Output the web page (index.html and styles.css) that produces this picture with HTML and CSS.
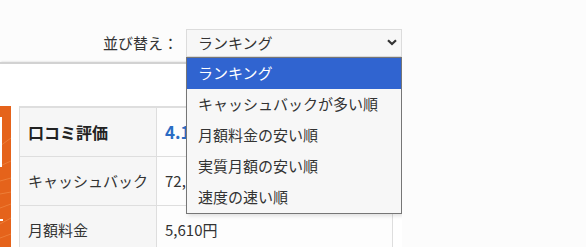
FILE: index.html
```html
<!DOCTYPE html>
<html lang="ja">
<head>
<meta charset="utf-8">
<link rel="stylesheet" href="styles.css">
</head>
<body>
<div class="page">
  <div class="sortbar">
    <span class="sort-label">並び替え：</span>
    <div class="sort">
      <div class="select">
        <span>ランキング</span>
        <svg class="chev" width="10" height="7" viewBox="0 0 10 7"><path d="M1 1.2 L5 5 L9 1.2" fill="none" stroke="#333" stroke-width="2.2"/></svg>
      </div>
      <ul class="menu">
        <li class="active">ランキング</li>
        <li>キャッシュバックが多い順</li>
        <li>月額料金の安い順</li>
        <li>実質月額の安い順</li>
        <li>速度の速い順</li>
      </ul>
    </div>
  </div>
  <div class="card">
    <div class="banner">
      <svg width="11" height="141" viewBox="0 0 11 141">
        <rect width="11" height="141" fill="#e5631b"/>
        <path d="M0 40 L11 32 M0 60 L11 55 M0 75 L11 72 M0 88 L11 86 M0 102 L11 98 M0 118 L11 112 M0 132 L11 128" stroke="#f08a45" stroke-width="1" opacity="0.7"/>
        <rect x="0" y="11" width="2" height="50" fill="#fff"/>
        <rect x="0" y="113" width="3" height="2" fill="#fff"/>
      </svg>
    </div>
    <table class="spec">
      <tr>
        <th class="strong">口コミ評価</th>
        <td class="score">4.14</td>
      </tr>
      <tr>
        <th>キャッシュバック</th>
        <td>72,000円</td>
      </tr>
      <tr>
        <th>月額料金</th>
        <td>5,610円</td>
      </tr>
    </table>
  </div>
</div>
</body>
</html>
```
FILE: styles.css
```css
html, body {
  margin: 0;
  padding: 0;
  background: #fcfcfc;
  font-family: "Noto Sans CJK JP", "Noto Sans", sans-serif;
  color: #333;
  overflow: hidden;
}
.page {
  width: 402px;
  height: 247px;
  overflow: hidden;
}
.sortbar {
  height: 62px;
  box-sizing: border-box;
  padding-top: 29px;
  display: flex;
  justify-content: flex-end;
  align-items: flex-start;
  gap: 8px;
}
.sort-label {
  font-size: 15px;
  line-height: 28px;
  color: #333;
}
.sort {
  position: relative;
  width: 216px;
  z-index: 2;
}
.select {
  height: 28px;
  box-sizing: border-box;
  border: 1px solid #dcdcdc;
  background: #f7f7f7;
  display: flex;
  align-items: center;
  justify-content: space-between;
  padding: 0 4px 0 11px;
  font-size: 15px;
  line-height: 26px;
}
.chev {
  display: block;
  margin-top: -2px;
}
.menu {
  position: absolute;
  top: 28px;
  left: 0;
  width: 216px;
  box-sizing: border-box;
  margin: 0;
  padding: 0;
  list-style: none;
  background: #f7f7f7;
  border: 1px solid #767676;
  box-shadow: 2px 2px 4px rgba(0, 0, 0, 0.12);
}
.menu li {
  height: 31px;
  line-height: 30px;
  padding-left: 11px;
  font-size: 15px;
  color: #333;
}
.menu li.active {
  background: #3064d0;
  color: #fff;
}
.card {
  background: #fff;
  border-top: 2px solid #d2d2d2;
  box-shadow: 1px 0 2px rgba(0, 0, 0, 0.18);
  height: 185px;
  box-sizing: border-box;
  padding-top: 42px;
  display: flex;
  align-items: flex-start;
  gap: 8px;
}
.banner {
  width: 11px;
  flex: none;
}
.banner svg {
  display: block;
}
.spec {
  border-collapse: collapse;
  width: 374px;
  border-top: 2px solid #dedede;
}
.spec th,
.spec td {
  border: 1px solid #dedede;
  height: 49px;
  box-sizing: border-box;
  padding: 0 8px;
  text-align: left;
  font-size: 15px;
  font-weight: normal;
  white-space: nowrap;
}
.spec th {
  width: 136px;
  background: #f6f6f6;
}
.spec td {
  background: #fdfdfd;
}
.spec th.strong {
  font-weight: bold;
  font-size: 16px;
  color: #222;
}
.spec td.score {
  color: #2a6cc4;
  font-weight: bold;
  font-size: 17px;
}
```
